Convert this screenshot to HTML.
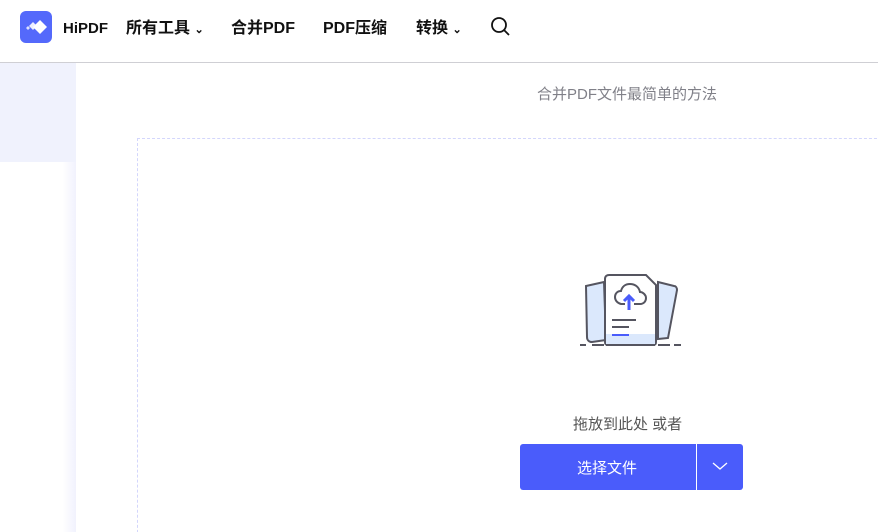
<!DOCTYPE html>
<html style="overflow:hidden"><head><meta charset="utf-8"><style>
*{margin:0;padding:0;box-sizing:border-box}
html,body{width:878px;height:532px;overflow:hidden}
body{background:#fff;font-family:"Liberation Sans","Noto Sans CJK SC",sans-serif;position:relative}
.hdr{position:absolute;left:0;top:0;width:878px;height:63px;border-bottom:1px solid #cfcfd4;background:#fff;z-index:2}
.logo{position:absolute;left:20px;top:11px;width:32px;height:32px;border-radius:6px;background:#5469fb}
.nav{position:absolute;top:18px;font-size:16px;line-height:22px;font-weight:bold;color:#111}
.side{position:absolute;left:0;top:63px;width:76px;height:469px;background:linear-gradient(90deg,#fff 82%,#f1f2fd 100%)}
.side .t{position:absolute;left:0;top:0;width:76px;height:99px;background:#f0f2fd}
.box{position:absolute;left:137px;top:138px;width:760px;height:420px;border:1px dashed #d3d6fc}
.btn{position:absolute;left:520px;top:444px;width:223px;height:46px;background:#4a5cfb;border-radius:3px;color:#fff}
</style></head><body>
<div class="hdr">
 <div class="logo"><svg width="32" height="32" viewBox="0 0 32 32"><path d="M20 9l7 7-7 7-7-7z" fill="#fff"/><path d="M13 11l4 4-4 4-4-4z" fill="#fff" opacity=".9"/><path d="M8 15l2 2-2 2-2-2z" fill="#fff" opacity=".8"/></svg></div>
 <div class="nav" style="left:63px;font-size:15px">HiPDF</div>
 <div class="nav" style="left:126px">所有工具 <span style="font-size:11px">⌄</span></div>
 <div class="nav" style="left:231px">合并PDF</div>
 <div class="nav" style="left:323px">PDF压缩</div>
 <div class="nav" style="left:416px">转换 <span style="font-size:11px">⌄</span></div>
 <svg style="position:absolute;left:490px;top:16px" width="22" height="22" viewBox="0 0 22 22"><circle cx="9" cy="9" r="7" fill="none" stroke="#111" stroke-width="1.8"/><path d="M14 14l5 5" stroke="#111" stroke-width="1.8"/></svg>
</div>
<div class="side"><div class="t"></div></div>
<div style="position:absolute;left:537px;top:83px;font-size:15px;color:#808088">合并PDF文件最简单的方法</div>
<div class="box"></div>
<svg style="position:absolute;left:578px;top:272px" width="108" height="78" viewBox="0 0 108 78">
 <path d="M8 14l18-4 2 58-14 2c-3 0-5-2-5-5z" fill="#dbe8fc" stroke="#555560" stroke-width="2"/>
 <path d="M80 10l16 4c2 0 3 2 3 4l-9 48-10 1z" fill="#dbe8fc" stroke="#555560" stroke-width="2"/>
 <path d="M27 7c0-3 2-4 4-4h37l10 10v57c0 2-1 3-3 3H30c-2 0-3-1-3-3z" fill="#fff" stroke="#555560" stroke-width="2"/>
 <path d="M28 62h49v10H28z" fill="#dbe8fc"/>
 <path d="M28 73h49" stroke="#555560" stroke-width="2"/>
 <path d="M56 32h6c4 0 6-3 6-6s-3-6-6-6c-1-5-5-8-10-8s-8 3-9 7c-4 0-6 3-6 6s2 6 6 7h4" fill="none" stroke="#555560" stroke-width="2"/>
 <path d="M51 38v-13M46 29l5-5 5 5" fill="none" stroke="#4a5cfb" stroke-width="3"/>
 <path d="M34 48h24M34 55h17" stroke="#555560" stroke-width="2"/><path d="M34 63h17" stroke="#4a5cfb" stroke-width="2"/>
 <path d="M2 73h6M14 73h12M80 73h12M96 73h7" stroke="#555560" stroke-width="2"/>
</svg>
<div style="position:absolute;left:573px;top:413px;font-size:15px;color:#555">拖放到此处 或者</div>
<div class="btn"><span style="position:absolute;left:57px;top:13px;font-size:15px">选择文件</span>
 <div style="position:absolute;left:176px;top:0;width:1px;height:46px;background:#fff"></div>
 <svg style="position:absolute;left:192px;top:17px" width="16" height="10"><path d="M1 2l7 6 7-6" fill="none" stroke="#fff" stroke-width="1.3"/></svg></div>
</body></html>
